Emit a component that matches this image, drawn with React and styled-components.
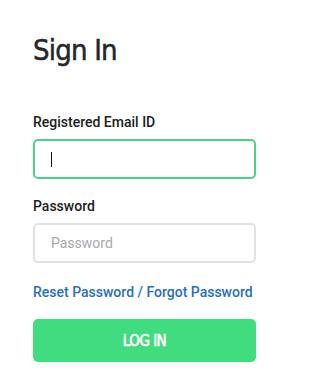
import styled, { createGlobalStyle } from "styled-components"

const GlobalStyle = createGlobalStyle`
    body {
        margin: 0;
        background: #ffffff;
        font-family: Roboto, "Liberation Sans", sans-serif;
    }
`

export default function App() {
    return (
        <>
            <GlobalStyle />
            <Page>
                <Title>Sign In</Title>

                <Field>
                    <Label>Registered Email ID</Label>
                    <InputBox $active>
                        <Caret />
                    </InputBox>
                </Field>

                <Field>
                    <Label>Password</Label>
                    <InputBox>
                        <Placeholder>Password</Placeholder>
                    </InputBox>
                </Field>

                <ForgotLink href="#">Reset Password / Forgot Password</ForgotLink>

                <LoginButton type="button">LOG IN</LoginButton>
            </Page>
        </>
    )
}

const Page = styled.div`
    width: 223px;
    padding: 33px 26px 0 33px;
    display: flex;
    flex-direction: column;
`

const Title = styled.h1`
    margin: 0 0 47px;
    font-family: "DejaVu Sans Condensed", "DejaVu Sans", sans-serif;
    font-size: 29px;
    font-weight: 400;
    line-height: 34px;
    color: #24272b;
    letter-spacing: -0.8px;
    -webkit-text-stroke: 0.5px #24272b;
`

const Field = styled.div`
    display: flex;
    flex-direction: column;
    gap: 9px;
    margin-bottom: 19px;
`

const Label = styled.label`
    font-size: 14px;
    font-weight: 500;
    line-height: 16px;
    color: #1c1c1c;
`

const InputBox = styled.div`
    height: 40px;
    box-sizing: border-box;
    border: 2px solid ${(p) => (p.$active ? "#4fd088" : "#e1e2e4")};
    border-radius: 5px;
    display: flex;
    align-items: center;
    padding-left: 16px;
`

const Caret = styled.span`
    width: 1px;
    height: 15px;
    background: #111;
`

const Placeholder = styled.span`
    font-size: 14px;
    color: #a6a9ad;
`

const ForgotLink = styled.a`
    margin-top: 2px;
    font-size: 14px;
    font-weight: 500;
    line-height: 16px;
    color: #2a6fbf;
    text-decoration: none;
`

const LoginButton = styled.button`
    margin-top: 19px;
    height: 43px;
    border: none;
    border-radius: 5px;
    background: #42dc80;
    color: #ffffff;
    font-family: "DejaVu Sans Condensed", "DejaVu Sans", sans-serif;
    font-size: 15px;
    font-weight: 400;
    letter-spacing: -0.5px;
    -webkit-text-stroke: 0.6px #ffffff;
`
